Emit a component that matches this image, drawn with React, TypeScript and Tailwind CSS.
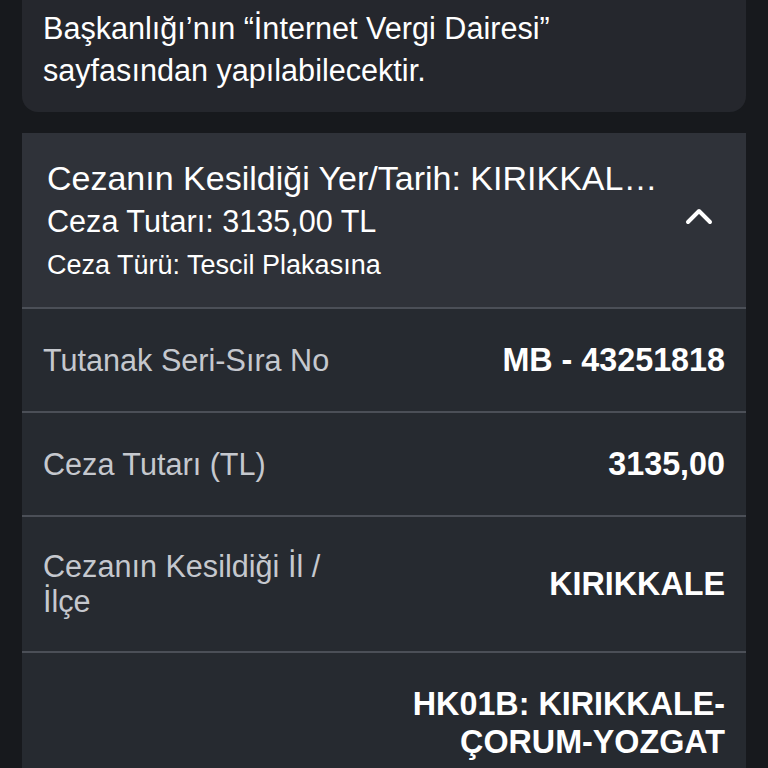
import React from "react";

const rows = [
  { label: "Tutanak Seri-Sıra No", value: "MB - 43251818" },
  { label: "Ceza Tutarı (TL)", value: "3135,00" },
  { label: "Cezanın Kesildiği İl / İlçe", value: "KIRIKKALE" },
  {
    label: "Cezanın Kesildiği Yer",
    value: "HK01B: KIRIKKALE-ÇORUM-YOZGAT D200 KAR YOLU KAVŞAĞI 10. KM MEVKİİ",
  },
];

const App = () => {
  return (
    <div className="min-h-[768px] bg-[#17191d] px-[22px] font-['Liberation_Sans',Arial,sans-serif] text-white">
      {/* Info card (scrolled) */}
      <div className="rounded-b-2xl bg-[#25272d] pl-[21px] pr-[40px] pt-[7px] pb-[21px]">
        <p className="text-[30.6px] leading-[42px] text-white">
          Başkanlığı’nın “İnternet Vergi Dairesi” sayfasından yapılabilecektir.
        </p>
      </div>

      {/* Fine card */}
      <div className="mt-[21px] bg-[#262a30]">
        <div className="flex items-center bg-[#2f3239] pl-[25px] pr-[32px] pt-6 pb-5">
          <div className="min-w-0 flex-1">
            <div className="w-[616px] truncate text-[34px] leading-[42px]">
              Cezanın Kesildiği Yer/Tarih: KIRIKKALE-ÇORUM-YOZGAT
            </div>
            <div className="text-[30.6px] leading-[44px]">Ceza Tutarı: 3135,00 TL</div>
            <div className="text-[27px] leading-[44px]">Ceza Türü: Tescil Plakasına</div>
          </div>
          <svg width="30" height="20" viewBox="0 0 30 20" className="mb-3 shrink-0">
            <polyline
              points="4,16 15,5 26,16"
              fill="none"
              stroke="white"
              strokeWidth="4"
              strokeLinecap="round"
              strokeLinejoin="round"
            />
          </svg>
        </div>

        {rows.map((row) => (
          <div
            key={row.label}
            className="grid grid-cols-[320px_1fr] items-center gap-4 border-t-2 border-[#4b4f57] px-[21px] py-8"
          >
            <div className="text-[30.6px] leading-[35px] text-[#c5c8ce]">{row.label}</div>
            <div className="text-right text-[32.3px] font-bold leading-[38px]">{row.value}</div>
          </div>
        ))}
      </div>
    </div>
  );
};

export default App;
